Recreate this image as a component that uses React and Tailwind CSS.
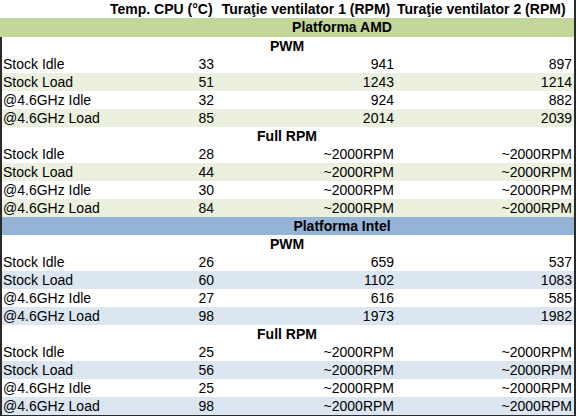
import React from "react";

const groups = [
  {
    name: "Platforma AMD",
    band: "bg-[#c4d79b]",
    tint: "bg-[#ebf1de]",
    bandH: "h-[19px]",
    sections: [
      {
        title: "PWM",
        rows: [
          ["Stock Idle", "33", "941", "897"],
          ["Stock Load", "51", "1243", "1214"],
          ["@4.6GHz Idle", "32", "924", "882"],
          ["@4.6GHz Load", "85", "2014", "2039"],
        ],
      },
      {
        title: "Full RPM",
        rows: [
          ["Stock Idle", "28", "~2000RPM", "~2000RPM"],
          ["Stock Load", "44", "~2000RPM", "~2000RPM"],
          ["@4.6GHz Idle", "30", "~2000RPM", "~2000RPM"],
          ["@4.6GHz Load", "84", "~2000RPM", "~2000RPM"],
        ],
      },
    ],
  },
  {
    name: "Platforma Intel",
    band: "bg-[#95b3d7]",
    tint: "bg-[#dce6f1]",
    bandH: "h-[18px]",
    sections: [
      {
        title: "PWM",
        rows: [
          ["Stock Idle", "26", "659", "537"],
          ["Stock Load", "60", "1102", "1083"],
          ["@4.6GHz Idle", "27", "616", "585"],
          ["@4.6GHz Load", "98", "1973", "1982"],
        ],
      },
      {
        title: "Full RPM",
        rows: [
          ["Stock Idle", "25", "~2000RPM", "~2000RPM"],
          ["Stock Load", "56", "~2000RPM", "~2000RPM"],
          ["@4.6GHz Idle", "25", "~2000RPM", "~2000RPM"],
          ["@4.6GHz Load", "98", "~2000RPM", "~2000RPM"],
        ],
      },
    ],
  },
];

function DataRow({ r, tinted, tint }) {
  return (
    <div
      className={`grid grid-cols-[108px_106px_180px_178px] h-[18px] leading-[18px] ${
        tinted ? tint : "bg-white"
      }`}
    >
      <div className="pl-[1px] whitespace-nowrap">{r[0]}</div>
      <div className="text-right pr-[2px]">{r[1]}</div>
      <div className="text-right pr-[2px]">{r[2]}</div>
      <div className="text-right pr-[2px]">{r[3]}</div>
    </div>
  );
}

function Section({ s, tint }) {
  return (
    <>
      <div className="h-[18px] leading-[18px] font-bold text-center pr-[2px] bg-white">
        {s.title}
      </div>
      {s.rows.map((r, i) => (
        <DataRow key={i} r={r} tinted={i % 2 === 1} tint={tint} />
      ))}
    </>
  );
}

export default function App() {
  return (
    <div
      className="w-[580px] h-[416px] overflow-hidden bg-white text-black text-[14px]"
      style={{ fontFamily: '"Liberation Sans", Arial, sans-serif' }}
    >
      <div className="w-[576px] border-r-2 border-[#2a2a2a]">
        <div className="grid grid-cols-[110px_106px_180px_178px] h-[18px] leading-[18px] font-bold whitespace-nowrap">
          <div />
          <div className="text-right pr-[4px]">Temp. CPU (°C)</div>
          <div className="text-center pr-[2px] pl-[2px]">Turaţie ventilator 1 (RPM)</div>
          <div className="text-left pl-[1px]">Turaţie ventilator 2 (RPM)</div>
        </div>
        {groups.map((g, gi) => (
          <React.Fragment key={gi}>
            <div
              className={`${g.band} ${g.bandH} leading-[19px] font-bold flex ${
                gi === 1 ? "border-l-2 border-[#2a2a2a]" : ""
              }`}
            >
              <div className={gi === 1 ? "w-[108px]" : "w-[110px]"} />
              <div className="flex-1 text-center">{g.name}</div>
            </div>
            <div
              className={`border-l-2 border-[#2a2a2a] ${
                gi === 1 ? "border-b-[1px]" : ""
              }`}
            >
              {g.sections.map((s, si) => (
                <Section key={si} s={s} tint={g.tint} />
              ))}
            </div>
          </React.Fragment>
        ))}
      </div>
    </div>
  );
}
